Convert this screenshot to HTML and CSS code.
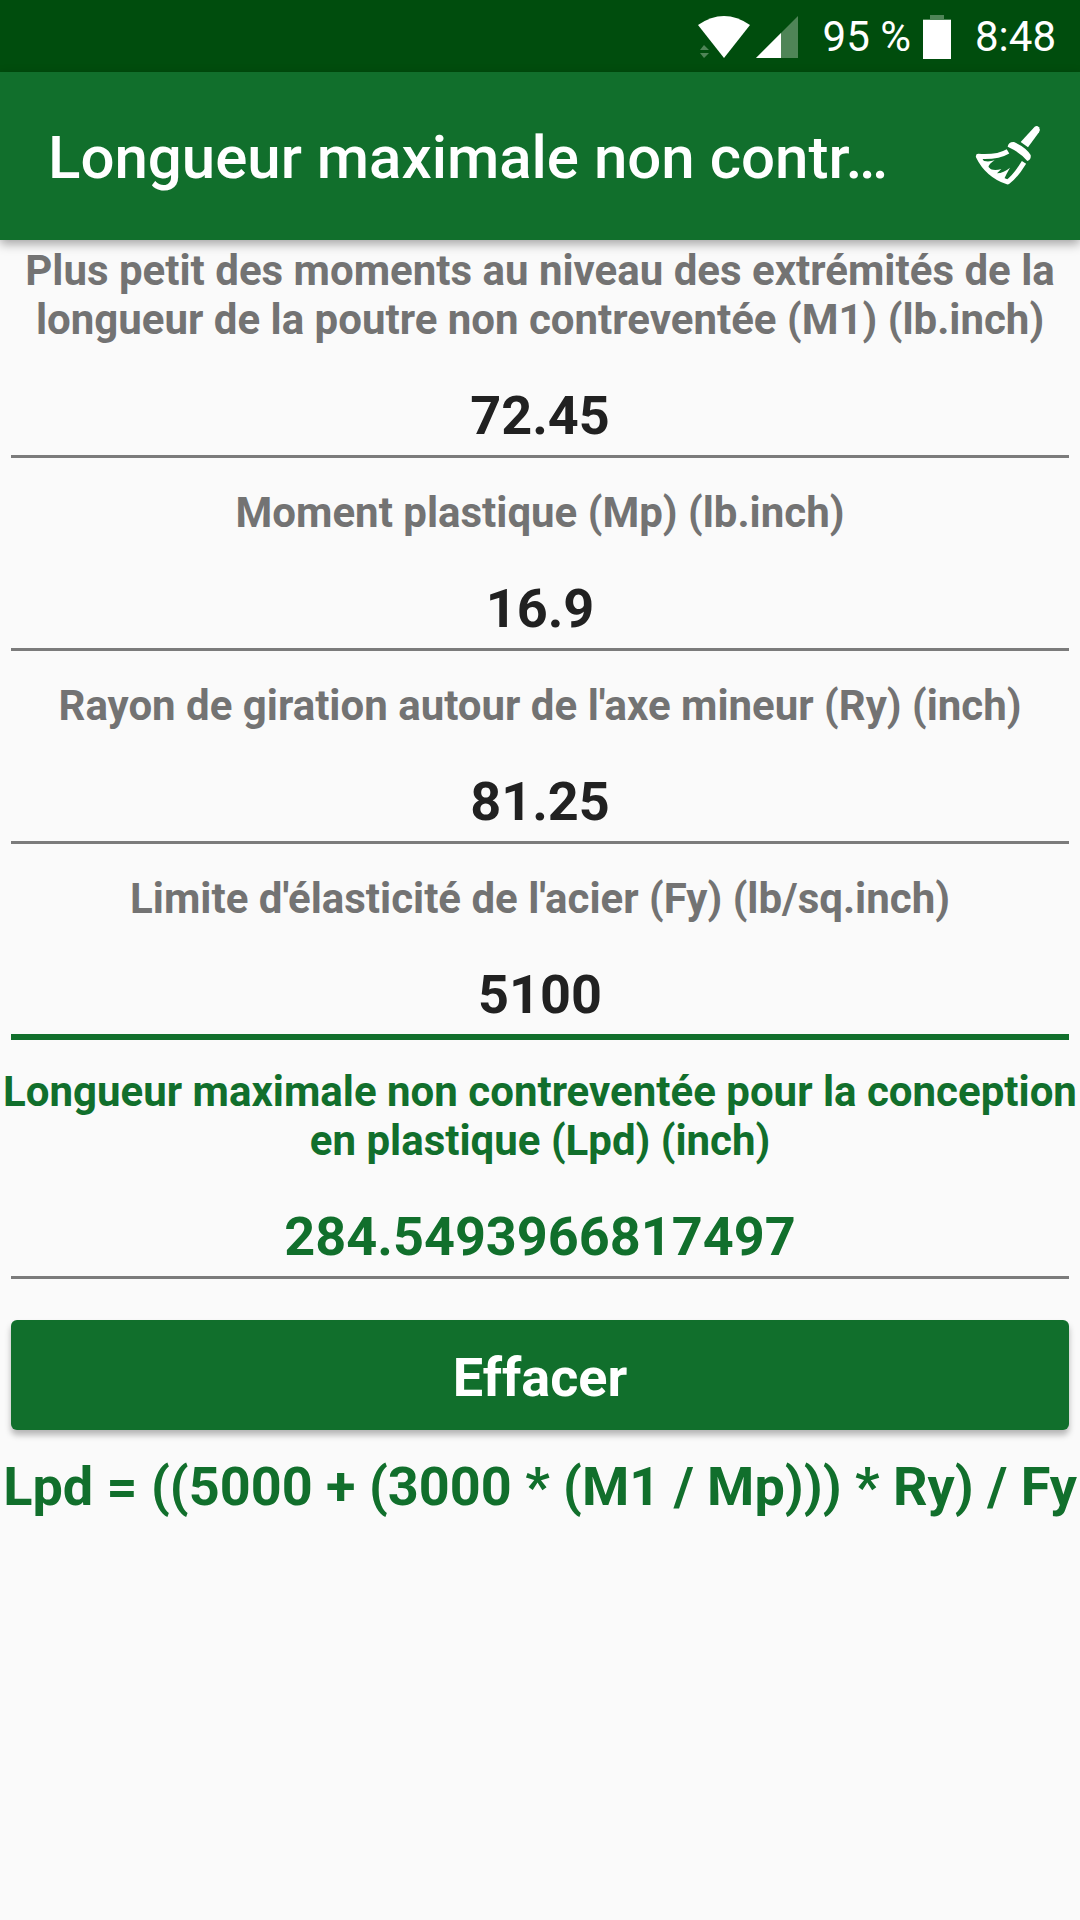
FILE: index.html
```html
<!DOCTYPE html>
<html lang="fr">
<head>
  <meta charset="UTF-8" />
  <meta name="viewport" content="width=device-width, initial-scale=1" />
  <title>Longueur maximale non contreventée</title>
  <link rel="stylesheet" href="styles.css">
</head>
<body>
  <div class="status-bar">
    <div class="signals">
      <svg class="wifi" width="54" height="44" viewBox="0 0 54 44" aria-hidden="true">
        <path fill="#fff" d="M1 10Q27 -8 53 10L27 43Z"/>
        <path fill="#4f8557" d="M3 35L7 30L12 35ZM3 38L7 43L12 38Z"/>
      </svg>
      <svg class="cell" width="44" height="44" viewBox="0 0 44 44" aria-hidden="true">
        <path fill="#4f8557" d="M43 1V43H1Z"/>
        <path fill="#fff" d="M26 18V43H1Z"/>
      </svg>
    </div>
    <span>95 %</span>
    <svg class="battery" width="28" height="44" viewBox="0 0 28 44" aria-hidden="true">
      <path fill="#4f8557" d="M7 0H21V4H28V6H0V4H7Z"/>
      <path fill="#fff" d="M0 5H28V44H0Z"/>
    </svg>
    <span>8:48</span>
  </div>

  <header class="app-bar">
    <h1>Longueur maximale non contr…</h1>
    <button type="button" class="icon-btn" aria-label="Effacer les champs">
      <svg width="72" height="68" viewBox="96 66 216 204" fill="none" stroke="#fff" aria-hidden="true">
        <path fill="#fff" stroke="none" d="M284 80Q291 75 297 82Q302 89 297 97L264 142L242 126Z"/>
        <path fill="#fff" stroke="none" d="M203 140Q205 125 222 126Q258 142 272 165Q274 180 262 183Q242 158 203 140Z"/>
        <path stroke-width="15" stroke-linejoin="round" d="M204 154Q172 173 115 169Q142 225 203 246Q225 231 252 187"/>
        <path fill="#fff" stroke="none" d="M122 180Q142 188 164 181Q147 191 144 204Q161 215 184 207L171 220Q191 219 210 203Q200 220 192 238Q145 222 122 180Z"/>
      </svg>
    </button>
  </header>

  <main>
    <form class="calc">
      <div class="field">
        <label for="m1">Plus petit des moments au niveau des extrémités de la longueur de la poutre non contreventée (M1) (lb.inch)</label>
        <input id="m1" type="text" inputmode="decimal" value="72.45">
      </div>
      <div class="field">
        <label for="mp">Moment plastique (Mp) (lb.inch)</label>
        <input id="mp" type="text" inputmode="decimal" value="16.9">
      </div>
      <div class="field">
        <label for="ry">Rayon de giration autour de l'axe mineur (Ry) (inch)</label>
        <input id="ry" type="text" inputmode="decimal" value="81.25">
      </div>
      <div class="field active">
        <label for="fy">Limite d'élasticité de l'acier (Fy) (lb/sq.inch)</label>
        <input id="fy" type="text" inputmode="decimal" value="5100">
      </div>
      <div class="field result">
        <label for="lpd">Longueur maximale non contreventée pour la conception en plastique (Lpd) (inch)</label>
        <input id="lpd" type="text" value="284.5493966817497" readonly>
      </div>
      <button type="button" class="clear-btn">Effacer</button>
    </form>
    <p class="formula">Lpd = ((5000 + (3000 * (M1 / Mp))) * Ry) / Fy</p>
  </main>
</body>
</html>
```

FILE: styles.css
```css
* { box-sizing: border-box; }
body {
  margin: 0;
  background: #fafafa;
  color: #212121;
  font-family: Roboto, sans-serif;
}

/* status bar */
.status-bar {
  display: flex;
  justify-content: flex-end;
  align-items: center;
  height: 72px;
  padding: 2px 24px 0;
  background: #004d0d;
  color: #fff;
  font-size: 42px;
  line-height: 48px;
}
.signals { display: flex; gap: 4px; margin-right: 24px; }
.battery { margin: 0 24px 0 12px; }

/* app bar */
.app-bar {
  position: relative;
  display: flex;
  align-items: center;
  gap: 72px;
  height: 168px;
  padding: 0 36px 0 48px;
  background: #116f2c;
  color: #fff;
  box-shadow: 0 4px 10px rgba(0, 0, 0, 0.35);
}
.app-bar h1 {
  flex: 1;
  min-width: 0;
  margin: 0;
  padding-top: 4px;
  font-size: 60px;
  font-weight: 500;
  line-height: 72px;
  white-space: nowrap;
  overflow: hidden;
  text-overflow: ellipsis;
}
.icon-btn {
  padding: 0;
  border: none;
  background: none;
}
.icon-btn svg { display: block; }

/* form */
.calc {
  display: flex;
  flex-direction: column;
  gap: 30px;
  padding-top: 6px;
}
.field {
  display: flex;
  flex-direction: column;
  text-align: center;
}
.field label {
  color: #737373;
  font-size: 42px;
  font-weight: bold;
  line-height: 49px;
}
.field input {
  height: 114px;
  margin: 0 11px;
  padding: 39px 0 8px;
  border: none;
  border-bottom: 3px solid #7b7b7b;
  border-radius: 0;
  outline: none;
  background: none;
  color: #212121;
  font-family: inherit;
  font-size: 54px;
  font-weight: bold;
  line-height: 64px;
  text-align: center;
}
.field.active input {
  border-color: #116f2c;
  box-shadow: 0 3px #116f2c;
}
.field.result label,
.field.result input { color: #116f2c; }

.clear-btn {
  height: 110px;
  margin: 11px 11px 0;
  padding: 4px 0 0;
  border: none;
  border-radius: 6px;
  background: #116f2c;
  color: #fff;
  font-family: inherit;
  font-size: 54px;
  font-weight: bold;
  box-shadow: 0 5px 6px rgba(0, 0, 0, 0.28);
}
.formula {
  margin: 25px 0 0;
  color: #116f2c;
  font-size: 54px;
  font-weight: bold;
  line-height: 64px;
  text-align: center;
}
```
